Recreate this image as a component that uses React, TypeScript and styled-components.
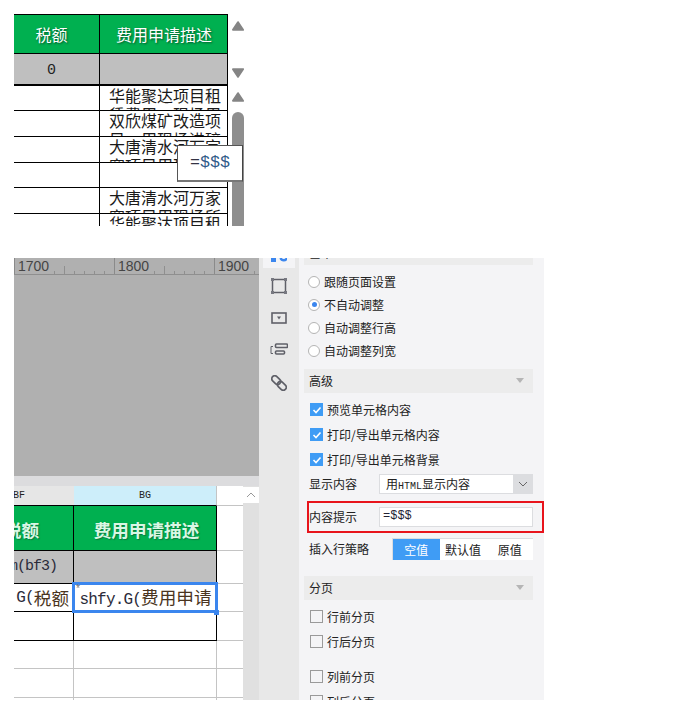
import React from "react";
import styled, { createGlobalStyle } from "styled-components";

const Global = createGlobalStyle`
  html, body { margin: 0; padding: 0; background: #fff; }
  body { font-family: "Noto Sans CJK SC", "Liberation Sans", sans-serif; }
`;
const Page = styled.div`
  width: 686px; height: 713px; overflow: hidden; display: flex; flex-direction: column;
  padding: 14px 0 0 14px; box-sizing: border-box;
`;
/* top crop */
const TopCrop = styled.div`
  position: relative; display: flex; gap: 4px; width: 230px; height: 212px; overflow: hidden;
`;
const TopTable = styled.div`width: 214px; display: flex; flex-direction: column; flex: none;`;
const TopRow = styled.div<{ $h: number; $bg?: string; $line?: number; $first?: boolean }>`
  display: grid; grid-template-columns: 86px 128px; height: ${p => p.$h}px; flex: none; box-sizing: border-box;
  background: ${p => p.$bg || "#fff"};
  border-bottom: ${p => p.$line ?? 1}px solid #000;
  border-top: ${p => (p.$first ? "1px solid #000" : "0")};
  border-right: 1px solid #000; overflow: hidden;
`;
const TopCell = styled.div<{ $head?: boolean; $right?: boolean }>`
  display: flex; align-items: center; justify-content: center; overflow: hidden; box-sizing: border-box;
  font-size: 16px; line-height: 20px;
  padding-right: ${p => (p.$right ? 0 : 10)}px;
  color: ${p => (p.$head ? "#fff" : "#111")};
  text-shadow: ${p => (p.$head ? "1px 1px 2px #05532a" : "none")};
  border-right: ${p => (p.$right ? "0" : "1px solid #000")};
`;
const TopText = styled.div`
  font-size: 16px; line-height: 19px; color: #1a1a1a; padding: 0 6px 0 9px; overflow: hidden; height: 100%; box-sizing: border-box; word-break: break-all;
`;
const Zero = styled.span`font: 15px/20px "Liberation Mono", monospace; color: #222; padding-top: 3px;`;
const TopBar = styled.div`width: 12px; flex: none; display: flex; flex-direction: column; align-items: center; padding-top: 7px; box-sizing: border-box;`;
const Arrow = styled.svg<{ $mt?: number }>`display: block; flex: none; margin-top: ${p => p.$mt ?? 0}px;`;
const Thumb = styled.div`width: 12px; flex: 1; margin-top: 10px; background: #8e8e8e; border-radius: 6px 6px 0 0;`;
const Tip = styled.div`
  position: absolute; left: 163px; top: 131px; width: 66px; height: 37px; box-sizing: border-box;
  background: #fff; border: 1px solid #555; border-right-color: #444; border-bottom: 2px solid #777;
  display: flex; align-items: center; justify-content: center;
  font: 16.67px/20px "Liberation Mono", monospace; color: #334;
`;
const TipMoney = styled.span`color: #2f5a88;`;

/* bottom crop */
const Bottom = styled.div`display: flex; width: 530px; height: 442px; margin-top: 32px; overflow: hidden;`;
const Work = styled.div`width: 245px; flex: none; display: flex; flex-direction: column;`;
const Ruler = styled.div`height: 17px; flex: none; display: flex; background: #b0b0b0; border-bottom: 1px solid #8f8f8f; box-sizing: border-box; overflow: hidden;`;
const RulerPart = styled.div`position: relative; width: 100px; flex: none; box-sizing: border-box; padding-left: 3px; border-left: 1px solid #8a8a8a; font: 14px/17px "Liberation Sans", sans-serif; color: #454545;`;
const Ticks = styled.svg`position: absolute; left: 39px; bottom: 0;`;
const Canvas = styled.div`height: 201px; flex: none; background: #b0b0b0;`;
const Divider = styled.div`height: 10px; flex: none; background: #dcdcde;`;
const SheetWrap = styled.div`flex: 1; display: flex; min-height: 0;`;
const Sheet = styled.div`position: relative; width: 229px; flex: none; display: flex; flex-direction: column; overflow: hidden; background: #fff;`;
const SheetRow = styled.div<{ $h: number }>`
  display: grid; grid-template-columns: 60px 143px 26px; height: ${p => p.$h}px; flex: none;
`;
const Cell = styled.div<{ $bg?: string; $black?: boolean; $bottom?: boolean; $noRight?: boolean; $noLine?: boolean; $end?: number }>`
  box-sizing: border-box; overflow: hidden; display: flex; align-items: center; white-space: nowrap;
  justify-content: ${p => (p.$end !== undefined ? "flex-end" : "center")};
  padding-right: ${p => p.$end ?? 0}px;
  background: ${p => p.$bg || "transparent"};
  border-right: ${p => (p.$noRight ? "0" : `1px solid ${p.$black ? "#000" : "#c4c4c4"}`)};
  border-bottom: ${p => (p.$noLine ? "0" : `1px solid ${p.$bottom ? "#000" : "#c4c4c4"}`)};
`;
const ColHead = styled.span`font: 10px/19px "Liberation Mono", monospace; color: #222;`;
const BoldHead = styled.span<{ $shift?: boolean }>`
  font-size: 17.6px; font-weight: 700; color: #d9f7e4; text-shadow: 1px 1px 1px #0c7a3d; padding-top: 2px;
  padding-left: ${p => (p.$shift ? 3 : 0)}px; flex: none;
`;
const Mono = styled.span`font: 16px/20px "Liberation Mono", monospace; letter-spacing: -0.8px; color: #2b2b3a; flex: none;`;
const FormulaMono = styled(Mono)`font-size: 15px; letter-spacing: -1px;`;
const CnMono = styled.span`font-size: 17.6px; line-height: 19px; color: #4a3420; flex: none;`;
const Selection = styled.div`
  position: absolute; left: 58px; top: 96px; width: 146px; height: 31px; box-sizing: border-box;
  border: 3px solid #3b86ee; background: #fff; overflow: hidden;
  padding: 2px 2px 0 3px; line-height: 19px; text-align: center;
`;
const Handle = styled.div`position: absolute; left: 200px; top: 124px; width: 5px; height: 5px; background: #3b86ee;`;
const Mark = styled.span`position: absolute; left: 61px; top: 99px; font: 10px/10px "Liberation Mono", monospace; color: #777; z-index: 2;`;
const VBar = styled.div`width: 16px; flex: none; background: #e0e0e0; display: flex; flex-direction: column; align-items: center;`;
const VBtn = styled.div`width: 16px; height: 16px; margin-top: 1px; background: #fff; display: flex; align-items: center; justify-content: center;`;

const Side = styled.div`width: 40px; flex: none; background: #e8e8e8; display: flex; flex-direction: column; align-items: center;`;
const ActiveTab = styled.div`width: 32px; height: 10px; flex: none; background: #f4f4f6; display: flex; justify-content: center; overflow: hidden; margin-bottom: 10px;`;
const SideIcon = styled.svg<{ $mb: number }>`display: block; flex: none; margin-bottom: ${p => p.$mb}px;`;

const Panel = styled.div`width: 245px; flex: none; background: #f4f4f6; display: flex; flex-direction: column; overflow: hidden; padding: 0 11px 0 5px; box-sizing: border-box; color: #222; font-size: 12px;`;
const Section = styled.div<{ $mt?: number; $mb?: number }>`
  height: 24px; flex: none; background: #ececec; display: flex; align-items: center; justify-content: space-between;
  padding: 0 9px 1px 5px; box-sizing: border-box; margin-top: ${p => p.$mt ?? 0}px; margin-bottom: ${p => p.$mb ?? 0}px;
`;
const ScrolledSection = styled(Section)`margin-top: -17px;`;
const Caret = styled.i`width: 0; height: 0; border-left: 4px solid transparent; border-right: 4px solid transparent; border-top: 5px solid #b5b5b5;`;
const RadioRow = styled.label`height: 23px; flex: none; display: flex; align-items: center; gap: 4px; padding-left: 4px;`;
const Radio = styled.span<{ $on?: boolean }>`
  width: 12px; height: 12px; border-radius: 50%; border: 1px solid #b4b4b4; background: #fff; box-sizing: border-box; flex: none;
  display: flex; align-items: center; justify-content: center;
  &::after { content: ""; width: 5px; height: 5px; border-radius: 50%; background: ${p => (p.$on ? "#3b86ee" : "transparent")}; }
`;
const CheckRow = styled.label<{ $h?: number }>`height: ${p => p.$h ?? 25}px; flex: none; display: flex; align-items: center; gap: 4px; padding-left: 6px;`;
const Check = styled.span<{ $on?: boolean }>`
  width: 13px; height: 13px; flex: none; box-sizing: border-box; display: flex; align-items: center; justify-content: center;
  background: ${p => (p.$on ? "#3f9cf5" : "transparent")}; border: ${p => (p.$on ? "0" : "1px solid #9a9a9a")};
`;
const FormRow = styled.div<{ $h: number; $mt?: number }>`display: flex; align-items: center; height: ${p => p.$h}px; margin-top: ${p => p.$mt ?? 0}px; flex: none;`;
const FormLabel = styled.span<{ $w: number; $pl?: number }>`width: ${p => p.$w}px; flex: none; padding: 0 0 1px ${p => p.$pl ?? 5}px; box-sizing: border-box;`;
const Select = styled.div`flex: 1; height: 20px; box-sizing: border-box; background: #fff; border: 1px solid #dcdde0; display: flex; align-items: center; justify-content: space-between; padding-left: 6px; font-size: 12px;`;
const SelectText = styled.span`padding-bottom: 1px;`;
const Chev = styled.div`width: 20px; height: 20px; margin-right: -1px; background: #dcdde0; display: flex; align-items: center; justify-content: center;`;
const Html = styled.span`font: 10px "Liberation Mono", monospace;`;
const RedBox = styled.div`
  height: 32px; width: 237px; margin: 7px 0 5px 3px; flex: none; box-sizing: border-box; border: 2px solid #e8141c; display: flex; align-items: center;
`;
const Input = styled.div`width: 154px; height: 20px; box-sizing: border-box; background: #fff; border: 1px solid #dcdde0; font: 12px/17px "Liberation Mono", monospace; padding-left: 3px; color: #223;`;
const Seg = styled.div`flex: 1; height: 22px; display: flex; background: #fff; border-top: 1px solid #dcdde0; border-left: 1px solid #dcdde0; box-sizing: border-box; margin-left: -1px;`;
const SegItem = styled.span<{ $on?: boolean }>`
  flex: 1; display: flex; align-items: center; justify-content: center;
  background: ${p => (p.$on ? "#3f9cf5" : "#fff")}; color: ${p => (p.$on ? "#fff" : "#222")};
`;

const Up = ({ mt }: { mt?: number }) => (
  <Arrow $mt={mt} width="12" height="10" viewBox="0 0 12 10"><path d="M6 1.2 L11 8.8 H1 Z" fill="#858585" stroke="#858585" strokeWidth="2" strokeLinejoin="round" /></Arrow>
);
const Down = ({ mt }: { mt?: number }) => (
  <Arrow $mt={mt} width="12" height="10" viewBox="0 0 12 10"><path d="M6 8.8 L11 1.2 H1 Z" fill="#858585" stroke="#858585" strokeWidth="2" strokeLinejoin="round" /></Arrow>
);
const Tick = () => (
  <svg width="10" height="8" viewBox="0 0 10 8"><path d="M1.5 4 L4 6.5 L8.5 1.5" fill="none" stroke="#fff" strokeWidth="1.6" /></svg>
);
const RulerMark = ({ label }: { label: string }) => (
  <RulerPart>
    {label}
    <Ticks width="60" height="8" viewBox="0 0 60 8">
      {[0, 10, 20, 30, 40, 50].map(x => (
        <path key={x} d={`M${x + 0.5} ${x === 10 ? 0 : 5} V8`} stroke="#8f8f8f" />
      ))}
    </Ticks>
  </RulerPart>
);

export default function App() {
  return (
    <Page>
      <Global />
      <TopCrop>
        <TopTable>
          <TopRow $h={40} $bg="#00b050" $first>
            <TopCell $head>税额</TopCell>
            <TopCell $head $right>费用申请描述</TopCell>
          </TopRow>
          <TopRow $h={32} $bg="#bfbfbf" $line={2}>
            <TopCell><Zero>0</Zero></TopCell>
            <TopCell $right />
          </TopRow>
          <TopRow $h={25}><TopCell /><TopText>华能聚达项目租赁费用，现场用</TopText></TopRow>
          <TopRow $h={26}><TopCell /><TopText>双欣煤矿改造项目，用现场进碎</TopText></TopRow>
          <TopRow $h={26}><TopCell /><TopText>大唐清水河万家寨项目用现场</TopText></TopRow>
          <TopRow $h={25}><TopCell /><TopCell $right /></TopRow>
          <TopRow $h={26}><TopCell /><TopText>大唐清水河万家寨项目用现场所</TopText></TopRow>
          <TopRow $h={12} $line={0}><TopCell /><TopText>华能聚达项目租</TopText></TopRow>
        </TopTable>
        <TopBar>
          <Up />
          <Down mt={37} />
          <Up mt={14} />
          <Thumb />
        </TopBar>
        <Tip>=<TipMoney>$$$</TipMoney></Tip>
      </TopCrop>

      <Bottom>
        <Work>
          <Ruler>
            <RulerMark label="1700" />
            <RulerMark label="1800" />
            <RulerMark label="1900" />
          </Ruler>
          <Canvas />
          <Divider />
          <SheetWrap>
            <Sheet>
              <SheetRow $h={20}>
                <Cell $bg="#e6e6e6" $noRight $bottom $end={49}><ColHead>BF</ColHead></Cell>
                <Cell $bg="#cdeefa" $bottom><ColHead>BG</ColHead></Cell>
                <Cell $noRight />
              </SheetRow>
              <SheetRow $h={45}>
                <Cell $bg="#00b050" $black $bottom $end={34}><BoldHead>税额</BoldHead></Cell>
                <Cell $bg="#00b050" $black $bottom><BoldHead $shift>费用申请描述</BoldHead></Cell>
                <Cell $noRight />
              </SheetRow>
              <SheetRow $h={33}>
                <Cell $bg="#bfbfbf" $black $bottom $end={16}><FormulaMono>m(bf3)</FormulaMono></Cell>
                <Cell $bg="#bfbfbf" $black $bottom />
                <Cell $noRight />
              </SheetRow>
              <SheetRow $h={28}>
                <Cell $black $bottom $end={4}><Mono>G(</Mono><CnMono>税额</CnMono></Cell>
                <Cell $black $bottom />
                <Cell $noRight />
              </SheetRow>
              <SheetRow $h={29}>
                <Cell $black $bottom />
                <Cell $black $bottom />
                <Cell $noRight />
              </SheetRow>
              <SheetRow $h={28}><Cell /><Cell /><Cell $noRight /></SheetRow>
              <SheetRow $h={29}><Cell /><Cell /><Cell $noRight /></SheetRow>
              <SheetRow $h={2}><Cell $noLine /><Cell $noLine /><Cell $noRight $noLine /></SheetRow>
              <Selection><Mono>shfy.G(</Mono><CnMono>费用申请描述)</CnMono></Selection>
              <Mark>*</Mark>
              <Handle />
            </Sheet>
            <VBar>
              <VBtn>
                <svg width="10" height="6" viewBox="0 0 10 6"><path d="M1 5 L5 1 L9 5" fill="none" stroke="#999" /></svg>
              </VBtn>
            </VBar>
          </SheetWrap>
        </Work>

        <Side>
          <ActiveTab>
            <svg width="16" height="10" viewBox="0 0 16 10"><path d="M0 0h5v4H0z" fill="#3b86ee" /><path d="M9.5 0a3.5 3.5 0 0 0 6.5 0" fill="none" stroke="#3b86ee" strokeWidth="2.4" /></svg>
          </ActiveTab>
          <SideIcon $mb={17} width="16" height="16" viewBox="0 0 16 16">
            <rect x="1.5" y="1.5" width="13" height="13" fill="none" stroke="#5f6068" strokeWidth="1.5" />
            <path d="M0 0h3v3H0zM13 0h3v3h-3zM0 13h3v3H0zM13 13h3v3h-3z" fill="#777880" />
          </SideIcon>
          <SideIcon $mb={18} width="16" height="14" viewBox="0 0 16 14">
            <rect x="1" y="2" width="14" height="10" fill="none" stroke="#5f6068" strokeWidth="1.6" />
            <path d="M6 5.5h4l-2 3z" fill="#5f6068" />
          </SideIcon>
          <SideIcon $mb={20} width="18" height="12" viewBox="0 0 18 12">
            <path d="M3 3.5H1v7h2" fill="none" stroke="#5f6068" />
            <rect x="5.5" y="1" width="12" height="3.5" rx="1" fill="none" stroke="#5f6068" strokeWidth="1.6" />
            <rect x="5.5" y="8" width="9" height="3" rx="1" fill="none" stroke="#5f6068" strokeWidth="1.6" />
          </SideIcon>
          <SideIcon $mb={0} width="16" height="16" viewBox="0 0 16 16">
            <g transform="rotate(45 8 8)" fill="none" stroke="#5f6068" strokeWidth="1.7">
              <rect x="-1" y="5" width="10" height="6" rx="3" />
              <rect x="7" y="5" width="10" height="6" rx="3" />
            </g>
          </SideIcon>
        </Side>

        <Panel>
          <ScrolledSection $mb={5}>基本</ScrolledSection>
          <RadioRow><Radio />跟随页面设置</RadioRow>
          <RadioRow><Radio $on />不自动调整</RadioRow>
          <RadioRow><Radio />自动调整行高</RadioRow>
          <RadioRow><Radio />自动调整列宽</RadioRow>
          <Section $mt={7} $mb={4}>高级<Caret /></Section>
          <CheckRow><Check $on><Tick /></Check>预览单元格内容</CheckRow>
          <CheckRow><Check $on><Tick /></Check>打印/导出单元格内容</CheckRow>
          <CheckRow><Check $on><Tick /></Check>打印/导出单元格背景</CheckRow>
          <FormRow $h={20} $mt={2}>
            <FormLabel $w={75}>显示内容</FormLabel>
            <Select>
              <SelectText>用<Html>HTML</Html>显示内容</SelectText>
              <Chev><svg width="10" height="6" viewBox="0 0 10 6"><path d="M1 1 L5 5 L9 1" fill="none" stroke="#666" /></svg></Chev>
            </Select>
          </FormRow>
          <RedBox>
            <FormLabel $w={70} $pl={0}>内容提示</FormLabel>
            <Input>=$$$</Input>
          </RedBox>
          <FormRow $h={22}>
            <FormLabel $w={89}>插入行策略</FormLabel>
            <Seg>
              <SegItem $on>空值</SegItem>
              <SegItem>默认值</SegItem>
              <SegItem>原值</SegItem>
            </Seg>
          </FormRow>
          <Section $mt={16} $mb={4}>分页<Caret /></Section>
          <CheckRow><Check />行前分页</CheckRow>
          <CheckRow><Check />行后分页</CheckRow>
          <CheckRow $h={10} />
          <CheckRow><Check />列前分页</CheckRow>
          <CheckRow><Check />列后分页</CheckRow>
        </Panel>
      </Bottom>
    </Page>
  );
}
